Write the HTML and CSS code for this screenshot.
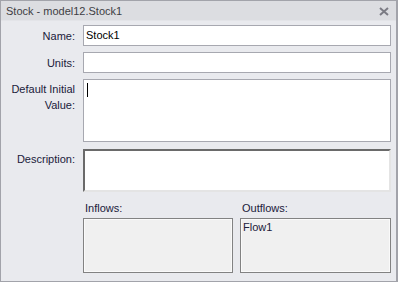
FILE: index.html
```html
<!DOCTYPE html>
<html lang="en">
<head>
  <meta charset="UTF-8" />
  <title>Stock - model12.Stock1</title>
  <link rel="stylesheet" href="styles.css">
</head>
<body>
  <div class="window">
    <div class="titlebar">
      <span class="title">Stock - model12.Stock1</span>
      <svg class="close" width="10" height="9" viewBox="0 0 10 9">
        <path d="M1 1 L9 8 M9 1 L1 8" stroke="#7b7b84" stroke-width="2" />
      </svg>
    </div>

    <div class="form">
      <label class="label center">Name:</label>
      <div class="field single">Stock1</div>

      <label class="label center">Units:</label>
      <div class="field single"></div>

      <label class="label top">Default Initial<br>Value:</label>
      <div class="field multi"><span class="caret"></span></div>

      <label class="label top desc-label">Description:</label>
      <div class="field sunken"></div>

      <div></div>
      <div class="flows">
        <div class="flow-col">
          <div class="flow-title">Inflows:</div>
          <div class="list"></div>
        </div>
        <div class="flow-col">
          <div class="flow-title">Outflows:</div>
          <div class="list">Flow1</div>
        </div>
      </div>
    </div>
  </div>
</body>
</html>
```

FILE: styles.css
```css
html, body {
  margin: 0;
  padding: 0;
}

body {
  font-family: "Liberation Sans", Arial, sans-serif;
  font-size: 11px;
  background: #e9eaee;
}

.window {
  width: 398px;
  height: 282px;
  box-sizing: border-box;
  border: 1px solid #a2a3aa;
  border-right-width: 2px;
  background: #e9eaee;
  display: flex;
  flex-direction: column;
}

.titlebar {
  height: 19px;
  background: #dcdde1;
  display: flex;
  align-items: center;
  justify-content: space-between;
  padding: 0 7px 0 5px;
  border-bottom: 1px solid #e3e4e8;
}

.title {
  color: #3e3e44;
  font-size: 11px;
}

.close {
  display: block;
  margin-top: 1px;
}

.form {
  display: grid;
  grid-template-columns: 74px 1fr;
  grid-template-rows: 21px 21px 63px 44px auto;
  column-gap: 8px;
  row-gap: 6px;
  padding: 4px 5px 0 0;
}

.label {
  color: #20203a;
  text-align: right;
  line-height: 16px;
}

.label.center {
  align-self: center;
}

.label.top {
  padding-top: 2px;
}

.desc-label {
  padding-top: 3px !important;
}

.field {
  box-sizing: border-box;
  background: #fff;
  border: 1px solid #a7a8b0;
  color: #000;
}

.single {
  padding: 3px 2px;
  line-height: 13px;
}

.multi {
  padding: 3px 3px;
}

.caret {
  display: block;
  width: 1px;
  height: 14px;
  background: #000;
}

.sunken {
  border-width: 2px;
  border-style: solid;
  border-color: #6a6a6a #e4e4e4 #e4e4e4 #6a6a6a;
}

.form .sunken {
  margin-top: 1px;
}

.flows {
  display: grid;
  grid-template-columns: 150px 1fr;
  column-gap: 7px;
  padding-top: 2px;
}

.flow-title {
  color: #20203a;
  padding-left: 2px;
  line-height: 16px;
  margin-bottom: 2px;
}

.list {
  height: 55px;
  box-sizing: border-box;
  background: #f0f0f0;
  border: 1px solid #828282;
  box-shadow: inset 0 0 0 1px #fafafa;
  color: #20203a;
  padding: 2px 2px;
  line-height: 13px;
}
```
